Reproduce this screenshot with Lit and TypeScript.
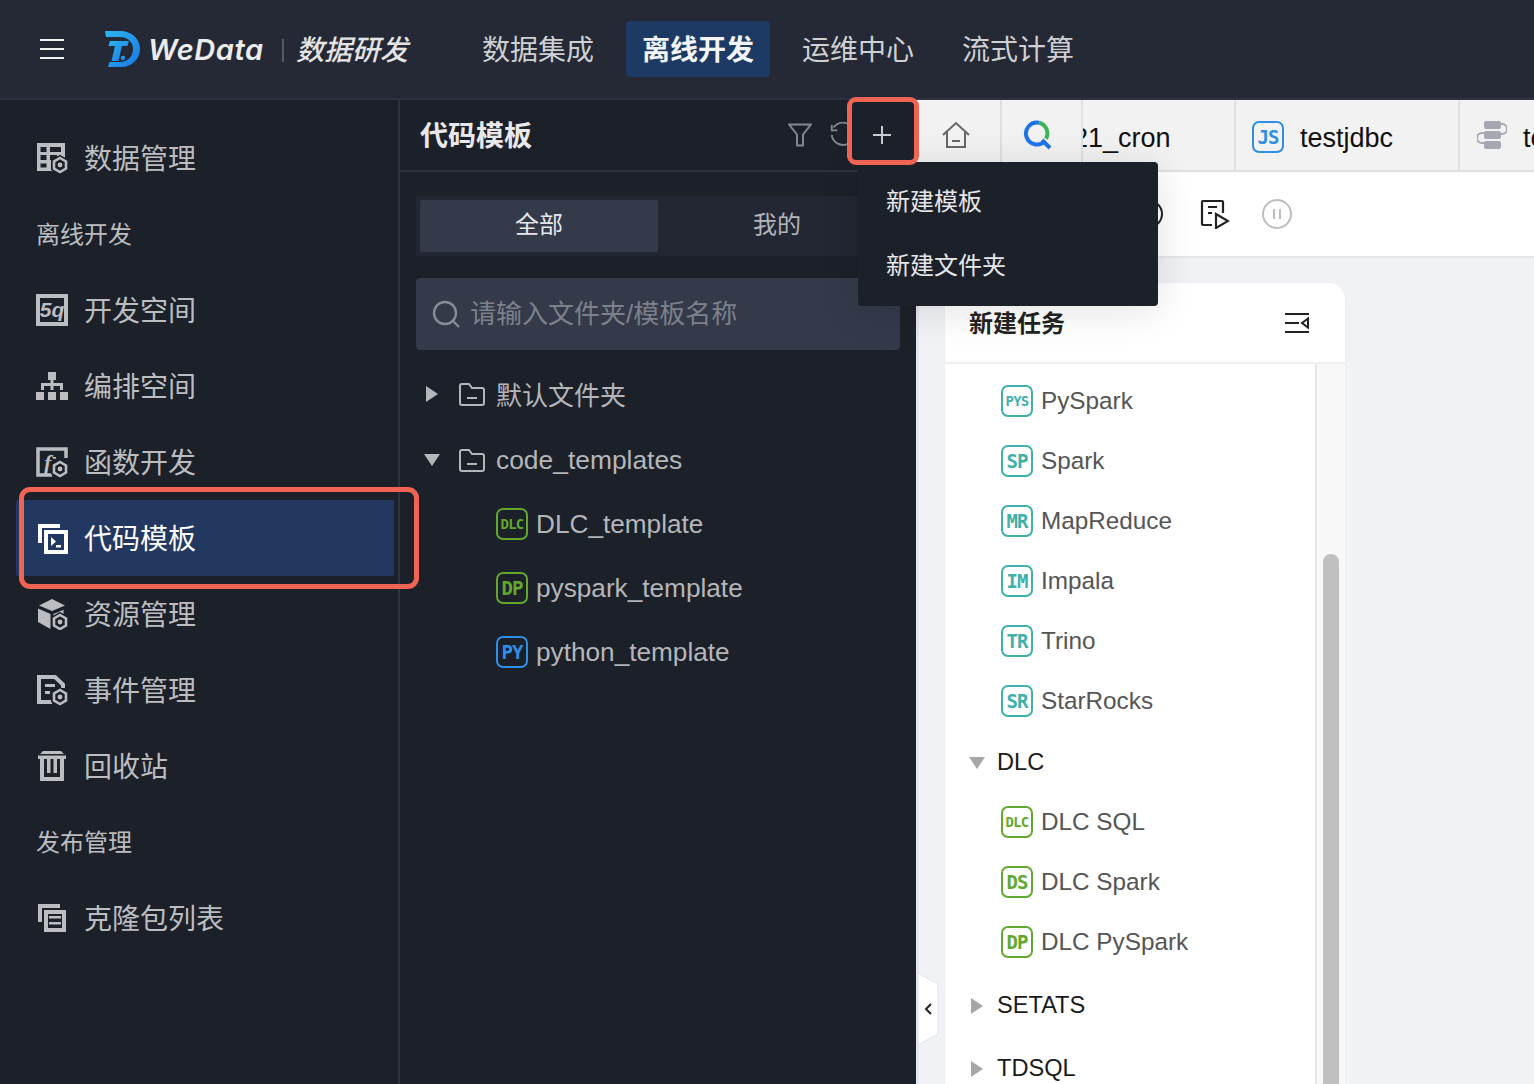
import { LitElement, html, css, svg } from "lit";
import { customElement } from "lit/decorators.js";

const nut = (cx: number, cy: number, bg = "#1c2029", c = "#bbbdc0") => svg`
  <polygon points="${cx},${cy - 9} ${cx + 8},${cy - 4.5} ${cx + 8},${cy + 4.5} ${cx},${cy + 9} ${cx - 8},${cy + 4.5} ${cx - 8},${cy - 4.5}" fill="${bg}" stroke="${bg}" stroke-width="2"/>
  <polygon points="${cx},${cy - 7} ${cx + 6},${cy - 3.5} ${cx + 6},${cy + 3.5} ${cx},${cy + 7} ${cx - 6},${cy + 3.5} ${cx - 6},${cy - 3.5}" fill="${bg}" stroke="${c}" stroke-width="2.6"/>
  <circle cx="${cx}" cy="${cy}" r="2.4" fill="${c}"/>`;

const G = "#bbbdc0";
const ICONS: Record<string, unknown> = {
  data: svg`<path fill="${G}" fill-rule="evenodd" d="M1 1h28v28H1zM4.500 5v5h6V5zM14 5v5h11V5zM4.500 13v5h6v-5zM14 13v5h7v-5zM4.500 21.500v4h6v-4z"/>${nut(24, 23)}`,
  sql: svg`<rect x="2" y="2" width="28" height="28" fill="none" stroke="${G}" stroke-width="4"/>
    <text x="16" y="23" text-anchor="middle" font-family="Liberation Sans" font-weight="700" font-style="italic" font-size="21" fill="${G}">5q</text>`,
  flow: svg`<path fill="${G}" d="M12 2h8v8h-2.500v3H27v7h-3v-4h-6.500v4h-3v-4H8v4H5v-7h9.500v-3H12zM0 22h8v8H0zM12 22h8v8h-8zM24 22h8v8h-8z"/>`,
  func: svg`<path fill="none" stroke="${G}" stroke-width="3.500" d="M30 12V3H2v26h14"/>
    <text x="8" y="24" font-family="Liberation Serif" font-weight="700" font-style="italic" font-size="22" fill="${G}">f</text>
    <rect x="17" y="11" width="3" height="1.800" fill="${G}"/>${nut(24, 23)}`,
  code: svg`<path fill="none" stroke="#fff" stroke-width="4" d="M4 21V4h20"/>
    <rect x="10" y="10" width="20" height="20" fill="none" stroke="#fff" stroke-width="4"/>
    <path fill="#fff" d="M15 15l5 4.500-5 4.500zM20 23h5v2.500h-5z"/>`,
  res: svg`<path fill="${G}" d="M16 1l13 6.500L16 13 3 7.500zM2 10.500l12.500 5.500v15L2 24zM17.500 16l10-4.200v5L17.500 24z"/>${nut(24, 24)}`,
  event: svg`<path fill="none" stroke="${G}" stroke-width="4" d="M16 28H3V3h16l8 7.500V14"/>
    <path fill="${G}" d="M9 10h10v3H9zM9 17h5v3H9z"/>${nut(24, 23)}`,
  trash: svg`<path fill="${G}" d="M7 1h18l3 3H4zM2 5.500h28v3.500H2zM4 9h4v18h16V9h4v22H4zM11 9h3.500v14H11zM17.500 9H21v14h-3.500z"/>`,
  clone: svg`<path fill="none" stroke="${G}" stroke-width="4" d="M4 20V4h20"/>
    <rect x="10" y="10" width="18" height="18" fill="none" stroke="${G}" stroke-width="4"/>
    <path fill="${G}" d="M13 14h12v2.500H13zM13 20h12v2.500H13z"/>`,
};

const NAV = [
  { k: "data", t: "数据管理" },
  { s: "离线开发" },
  { k: "sql", t: "开发空间" },
  { k: "flow", t: "编排空间" },
  { k: "func", t: "函数开发" },
  { k: "code", t: "代码模板", active: true },
  { k: "res", t: "资源管理" },
  { k: "event", t: "事件管理" },
  { k: "trash", t: "回收站" },
  { s: "发布管理" },
  { k: "clone", t: "克隆包列表" },
];

const caretRight = (c: string) => html`<svg width="16" height="18" viewBox="0 0 16 18"><path d="M2 1l12 8-12 8z" fill="${c}"/></svg>`;
const caretDown = (c: string) => html`<svg width="18" height="16" viewBox="0 0 18 16"><path d="M1 2h16l-8 12z" fill="${c}"/></svg>`;
const folder = html`<svg width="28" height="26" viewBox="0 0 28 26" fill="none" stroke="#b4b6ba" stroke-width="2"><path d="M2 5a2 2 0 0 1 2-2h7l3 4h10a2 2 0 0 1 2 2v13a2 2 0 0 1-2 2H4a2 2 0 0 1-2-2z"/><path d="M9 17h10"/></svg>`;

const RIGHT_A = [
  ["PYS", "PySpark", "sm"], ["SP", "Spark", ""], ["MR", "MapReduce", ""],
  ["IM", "Impala", ""], ["TR", "Trino", ""], ["SR", "StarRocks", ""],
];
const RIGHT_B = [["DLC", "DLC SQL", "sm"], ["DS", "DLC Spark", ""], ["DP", "DLC PySpark", ""]];

@customElement("app-root")
export class AppRoot extends LitElement {
  static styles = css`
    :host {
      display: block; position: relative; width: 1534px; height: 1084px; overflow: hidden;
      font-family: "Liberation Sans", "Noto Sans CJK SC", sans-serif; background: #1c2029;
    }
    svg { display: block; flex: none; }
    .top {
      height: 98px; background: #252936; border-bottom: 2px solid #2e3240;
      display: flex; align-items: center; padding-left: 40px;
    }
    .burger { width: 24px; height: 20px; display: flex; flex-direction: column; justify-content: space-between; }
    .burger i { display: block; height: 2px; background: #f0f0f0; }
    .logo { margin-left: 40px; }
    .brand { margin-left: 7px; font: italic 600 29px "Inter", "Liberation Sans", sans-serif; color: #ececec; letter-spacing: 0.6px; width: 116px; white-space: nowrap; }
    .bar { width: 2px; height: 23px; background: #555a66; margin: 2px 12px 0 18px; }
    .product { font-size: 28px; font-style: italic; color: #e4e4e4; font-weight: 500; width: 112px; white-space: nowrap; margin-bottom: 2px; }
    .menu { display: flex; gap: 16px; margin-left: 58px; }
    .menu span { height: 56px; line-height: 60px; padding: 0 16px; font-size: 28px; color: #cfd0d3; border-radius: 4px; }
    .menu span.on { background: #1d3a64; color: #f2f4f8; font-weight: 700; }

    .body { display: flex; height: 984px; }
    .side { width: 398px; border-right: 2px solid #2e3240; padding-top: 20px; flex: none; }
    .row { height: 76px; margin-right: 4px; margin-left: 16px; padding-left: 20px; display: flex; align-items: center; gap: 16px; font-size: 28px; color: #bbbdc0; border-radius: 2px; }
    .row span { margin-bottom: 2px; }
    .row.sec { font-size: 24px; gap: 0; }
    .row.sec span { margin-bottom: 4px; }
    .row.on { background: #233860; color: #fff; }

    .panel { width: 516px; flex: none; }
    .phead { height: 70px; border-bottom: 2px solid #2e3240; display: flex; align-items: center; padding: 0 16px 0 20px; font-size: 28px; font-weight: 700; color: #e8e8ea; }
    .phead b { flex: 1; font-weight: 700; margin-bottom: 2px; }
    .tools { display: flex; align-items: center; gap: 17px; margin-right: 45px; }
    .seg { margin: 24px 16px 0; height: 60px; background: #232733; padding: 4px; box-sizing: border-box; display: flex; border-radius: 2px; }
    .seg span { flex: 1; display: flex; align-items: center; justify-content: center; font-size: 24px; color: #b4b6ba; border-radius: 2px; box-sizing: border-box; padding-bottom: 7px; }
    .seg span.on { background: #343a4a; color: #e6e7e9; }
    .search { margin: 22px 16px 0; height: 72px; background: #343a4a; border-radius: 4px; display: flex; align-items: center; padding-left: 15px; gap: 9px; font-size: 26px; color: #7d818c; }
    .search span { margin-bottom: 6px; }
    .tree { margin-top: 12px; }
    .tnode { height: 64px; display: flex; align-items: center; font-size: 26.4px; color: #b4b6ba; }
    .tnode.first { margin-bottom: 2px; }
    .tnode.first .lbl { font-size: 26px; margin-bottom: 2px; }
    .tc { width: 16px; margin-left: 24px; display: flex; justify-content: center; margin-right: 18px; }
    .tnode .fl { margin-right: 10px; }
    .leaf { padding-left: 96px; gap: 8px; font-size: 26.2px; }
    .bdg {
      width: 32px; height: 32px; box-sizing: border-box; border: 2px solid currentColor; border-radius: 7px; flex: none;
      display: flex; align-items: center; justify-content: center; font: 700 19px/1 "DejaVu Sans Mono", monospace; letter-spacing: -1px;
    }
    .bdg.sm { font-size: 14px; letter-spacing: -0.8px; }
    .g { color: #62a82e; }
    .b { color: #2f8fe6; }
    .t { color: #3fb0ac; }

    .right { flex: 1; min-width: 0; background: #f1f2f6; display: flex; flex-direction: column; }
    .tabs { height: 70px; background: #f2f2f2; border-bottom: 2px solid #e0e0e0; display: flex; flex: none; overflow: hidden; }
    .tab { height: 70px; border-right: 2px solid #e0e0e0; display: flex; align-items: center; box-sizing: border-box; font-size: 27px; color: #111; flex: none; overflow: hidden; white-space: nowrap; }
    .tab > span:not(.bdg) { margin-top: 7px; }
    .tab .bdg { margin-top: 4px; }
    .tab.home { width: 86px; padding-left: 25px; }
    .tab.find { width: 81px; padding-left: 20px; }
    .tab.cron { width: 153px; }
    .tab.cron span { margin-left: -10px; }
    .tab.js { width: 224px; padding-left: 16px; gap: 16px; }
    .tab.last { border: 0; padding-left: 17px; gap: 16px; }
    .bar2 { height: 84px; background: #fff; border-bottom: 2px solid #e6e6e6; flex: none; display: flex; align-items: center; padding-left: 219px; }
    .work { flex: 1; min-height: 0; padding: 25px 0 0 26px; overflow: hidden; border-left: 3px solid #e3e6f0; box-sizing: border-box; }
    .card { width: 400px; height: 900px; background: #fff; border-radius: 0 16px 0 0; box-shadow: 0 0 2px rgba(0,0,0,.06); }
    .chead { height: 81px; border-bottom: 2px solid #eeeeee; display: flex; align-items: center; justify-content: space-between; padding: 0 36px 0 24px; font-size: 24px; font-weight: 700; color: #222; box-sizing: border-box; }
    .chead span { margin-bottom: 3px; }
    .cbody { display: flex; height: 720px; }
    .list { width: 372px; flex: none; border-right: 2px solid #e8e8e8; padding-top: 7px; box-sizing: border-box; overflow: hidden; }
    .track { flex: 1; background: #f8f8f8; padding: 190px 6px 0 6px; }
    .thumb { height: 600px; background: #c0c0c0; border-radius: 8px 8px 0 0; }
    .it { height: 60px; display: flex; align-items: center; padding-left: 56px; gap: 8px; font-size: 24.3px; color: #555; }
    .grp { height: 63px; display: flex; align-items: center; font-size: 23.6px; color: #1a1a1a; padding-left: 24px; box-sizing: border-box; }
    .grp .c { width: 16px; display: flex; justify-content: center; margin-right: 12px; }
    .grp.dlc { height: 61px; padding-top: 2px; }
    .grp.s1 { margin-top: 2px; }

    .dd {
      position: absolute; left: 858px; top: 162px; width: 300px; height: 144px; background: #1c2029; border-radius: 0 4px 4px 4px;
      padding: 8px 0; box-sizing: border-box; box-shadow: 0 4px 40px rgba(0,0,0,.12);
    }
    .dd div { height: 64px; box-sizing: border-box; padding-bottom: 6px; display: flex; align-items: center; padding-left: 28px; font-size: 24px; color: #e6e7e9; }
    .plusbox { position: absolute; left: 851px; top: 102px; width: 62px; height: 58px; padding-top: 8px; box-sizing: border-box; background: #1c2029; display: flex; align-items: center; justify-content: center; }
    .mark { position: absolute; box-sizing: border-box; border: 5px solid #ef6453; }
    .m1 { left: 847px; top: 97px; width: 72px; height: 68px; border-radius: 9px; }
    .m2 { left: 19px; top: 487px; width: 400px; height: 102px; border-radius: 11px; }
    .handle { position: absolute; left: 917px; top: 970px; }
  `;

  private badge(txt: string, color: string, size = "") {
    return html`<span class="bdg ${color} ${size}">${txt}</span>`;
  }

  render() {
    return html`
      <div class="top">
        <div class="burger"><i></i><i></i><i></i></div>
        <svg class="logo" width="37" height="37" viewBox="0 0 37 37">
          <defs><linearGradient id="lg" x1="0" y1="0" x2="1" y2="1"><stop offset="0" stop-color="#2bb7ee"/><stop offset="1" stop-color="#1a78e6"/></linearGradient></defs>
          <path fill="url(#lg)" d="M1 0h15c12 0 20 8 20 18s-8 18-19 18H4l1.500-5H16c8 0 13-6 13-13S24 6 16 6H2z"/>
          <path fill="url(#lg)" d="M6 10h19l-1.500 5H18l-3.500 15H7.500L11 15H4.500z"/>
          <circle cx="19" cy="27" r="2.200" fill="url(#lg)"/>
        </svg>
        <span class="brand">WeData</span>
        <span class="bar"></span>
        <span class="product">数据研发</span>
        <nav class="menu">
          <span>数据集成</span><span class="on">离线开发</span><span>运维中心</span><span>流式计算</span>
        </nav>
      </div>
      <div class="body">
        <aside class="side">
          ${NAV.map((n) =>
            n.s
              ? html`<div class="row sec"><span>${n.s}</span></div>`
              : html`<div class="row ${n.active ? "on" : ""}">
                  <svg width="32" height="32" viewBox="0 0 32 32">${ICONS[n.k as string]}</svg><span>${n.t}</span>
                </div>`
          )}
        </aside>
        <section class="panel">
          <div class="phead">
            <b>代码模板</b>
            <div class="tools">
              <svg width="24" height="24" viewBox="0 0 24 24" fill="none" stroke="#85888f" stroke-width="2" stroke-linejoin="round"><path d="M1 1.500h22l-8 10v11H9v-11z"/></svg>
              <svg width="26" height="26" viewBox="0 0 28 28" fill="none" stroke="#85888f" stroke-width="2"><path d="M5 6a12 12 0 1 1-2 8"/><path d="M3 3v6h6"/></svg>
            </div>
          </div>
          <div class="seg"><span class="on">全部</span><span>我的</span></div>
          <div class="search">
            <svg width="30" height="30" viewBox="0 0 30 30" fill="none" stroke="#898c95" stroke-width="2.400"><circle cx="14" cy="14" r="11"/><path d="M22 22l6 6"/></svg>
            <span>请输入文件夹/模板名称</span>
          </div>
          <div class="tree">
            <div class="tnode first"><span class="tc">${caretRight("#b4b6ba")}</span><span class="fl">${folder}</span><span class="lbl">默认文件夹</span></div>
            <div class="tnode"><span class="tc">${caretDown("#b4b6ba")}</span><span class="fl">${folder}</span><span class="lbl">code_templates</span></div>
            <div class="tnode leaf">${this.badge("DLC", "g", "sm")}DLC_template</div>
            <div class="tnode leaf">${this.badge("DP", "g")}pyspark_template</div>
            <div class="tnode leaf">${this.badge("PY", "b")}python_template</div>
          </div>
        </section>
        <section class="right">
          <div class="tabs">
            <div class="tab home">
              <svg width="30" height="30" viewBox="0 0 30 30" fill="none" stroke="#666" stroke-width="2"><path d="M2 15L15 3l13 12"/><path d="M6 12v15h18V12"/><path d="M11 21h8" /></svg>
            </div>
            <div class="tab find">
              <svg width="30" height="30" viewBox="0 0 30 30" fill="none" stroke-width="4"><path d="M17 2.700A11 11 0 1 0 23 21" stroke="#1f74e8"/><path d="M17 2.700a11 11 0 0 1 7 16" stroke="#3fb35a"/><path d="M20 20l8 8" stroke="#1f74e8"/></svg>
            </div>
            <div class="tab cron"><span>21_cron</span></div>
            <div class="tab js">${this.badge("JS", "b")}<span>testjdbc</span></div>
            <div class="tab last">
              <svg width="30" height="32" viewBox="0 0 30 32"><path fill="none" stroke="#a5a8b2" stroke-width="2" d="M22 5h3a4 4 0 0 1 0 10h-2M7 14H5a4 4 0 0 0 0 10h3"/><rect x="7" y="2" width="17" height="8" rx="2" fill="#a5a8b2"/><rect x="7" y="12" width="17" height="8" rx="2" fill="#a5a8b2"/><rect x="7" y="22" width="17" height="8" rx="2" fill="#a5a8b2"/></svg>
              <span>test</span>
            </div>
          </div>
          <div class="bar2">
            <svg width="28" height="28" viewBox="0 0 28 28" fill="none" stroke="#222" stroke-width="2"><circle cx="14" cy="14" r="13"/></svg>
            <svg style="margin-left:37px" width="30" height="30" viewBox="0 0 30 30" fill="none" stroke="#222" stroke-width="2.200"><path d="M12 26H3a1 1 0 0 1-1-1V3a1 1 0 0 1 1-1h19a1 1 0 0 1 1 1v11"/><path d="M8 8h9M8 14h4"/><path d="M16 15l12 7-12 7z"/></svg>
            <svg style="margin-left:32px" width="30" height="30" viewBox="0 0 30 30" fill="none" stroke="#bdbdbd" stroke-width="2"><circle cx="15" cy="15" r="14"/><path d="M12 10v10M18 10v10"/></svg>
          </div>
          <div class="work">
            <div class="card">
              <div class="chead">
                <span>新建任务</span>
                <svg width="24" height="20" viewBox="0 0 24 20" fill="none" stroke="#222" stroke-width="2"><path d="M0 1h24M0 10h14M0 19h24"/><path d="M23 5.500L17 10l6 4.500z"/></svg>
              </div>
              <div class="cbody">
                <div class="list">
                  ${RIGHT_A.map((r) => html`<div class="it">${this.badge(r[0], "t", r[2])}${r[1]}</div>`)}
                  <div class="grp dlc"><span class="c">${caretDown("#a6a6a6")}</span>DLC</div>
                  ${RIGHT_B.map((r) => html`<div class="it">${this.badge(r[0], "g", r[2])}${r[1]}</div>`)}
                  <div class="grp s1"><span class="c">${caretRight("#a6a6a6")}</span>SETATS</div>
                  <div class="grp"><span class="c">${caretRight("#a6a6a6")}</span>TDSQL</div>
                </div>
                <div class="track"><div class="thumb"></div></div>
              </div>
            </div>
          </div>
        </section>
      </div>
      <div class="handle">
        <svg width="24" height="78" viewBox="0 0 24 78">
          <path d="M1 3l16 9a4 4 0 0 1 4 4v46a4 4 0 0 1-4 4L1 75z" fill="#fff" stroke="#dfe3ee" stroke-width="1"/>
          <path d="M14 34l-5 5 5 5" fill="none" stroke="#222" stroke-width="2"/>
        </svg>
      </div>
      <div class="dd"><div>新建模板</div><div>新建文件夹</div></div>
      <div class="plusbox">
        <svg width="18" height="18" viewBox="0 0 18 18" stroke="#c9cbcf" stroke-width="2"><path d="M9 0v18M0 9h18"/></svg>
      </div>
      <div class="mark m1"></div>
      <div class="mark m2"></div>
    `;
  }
}
